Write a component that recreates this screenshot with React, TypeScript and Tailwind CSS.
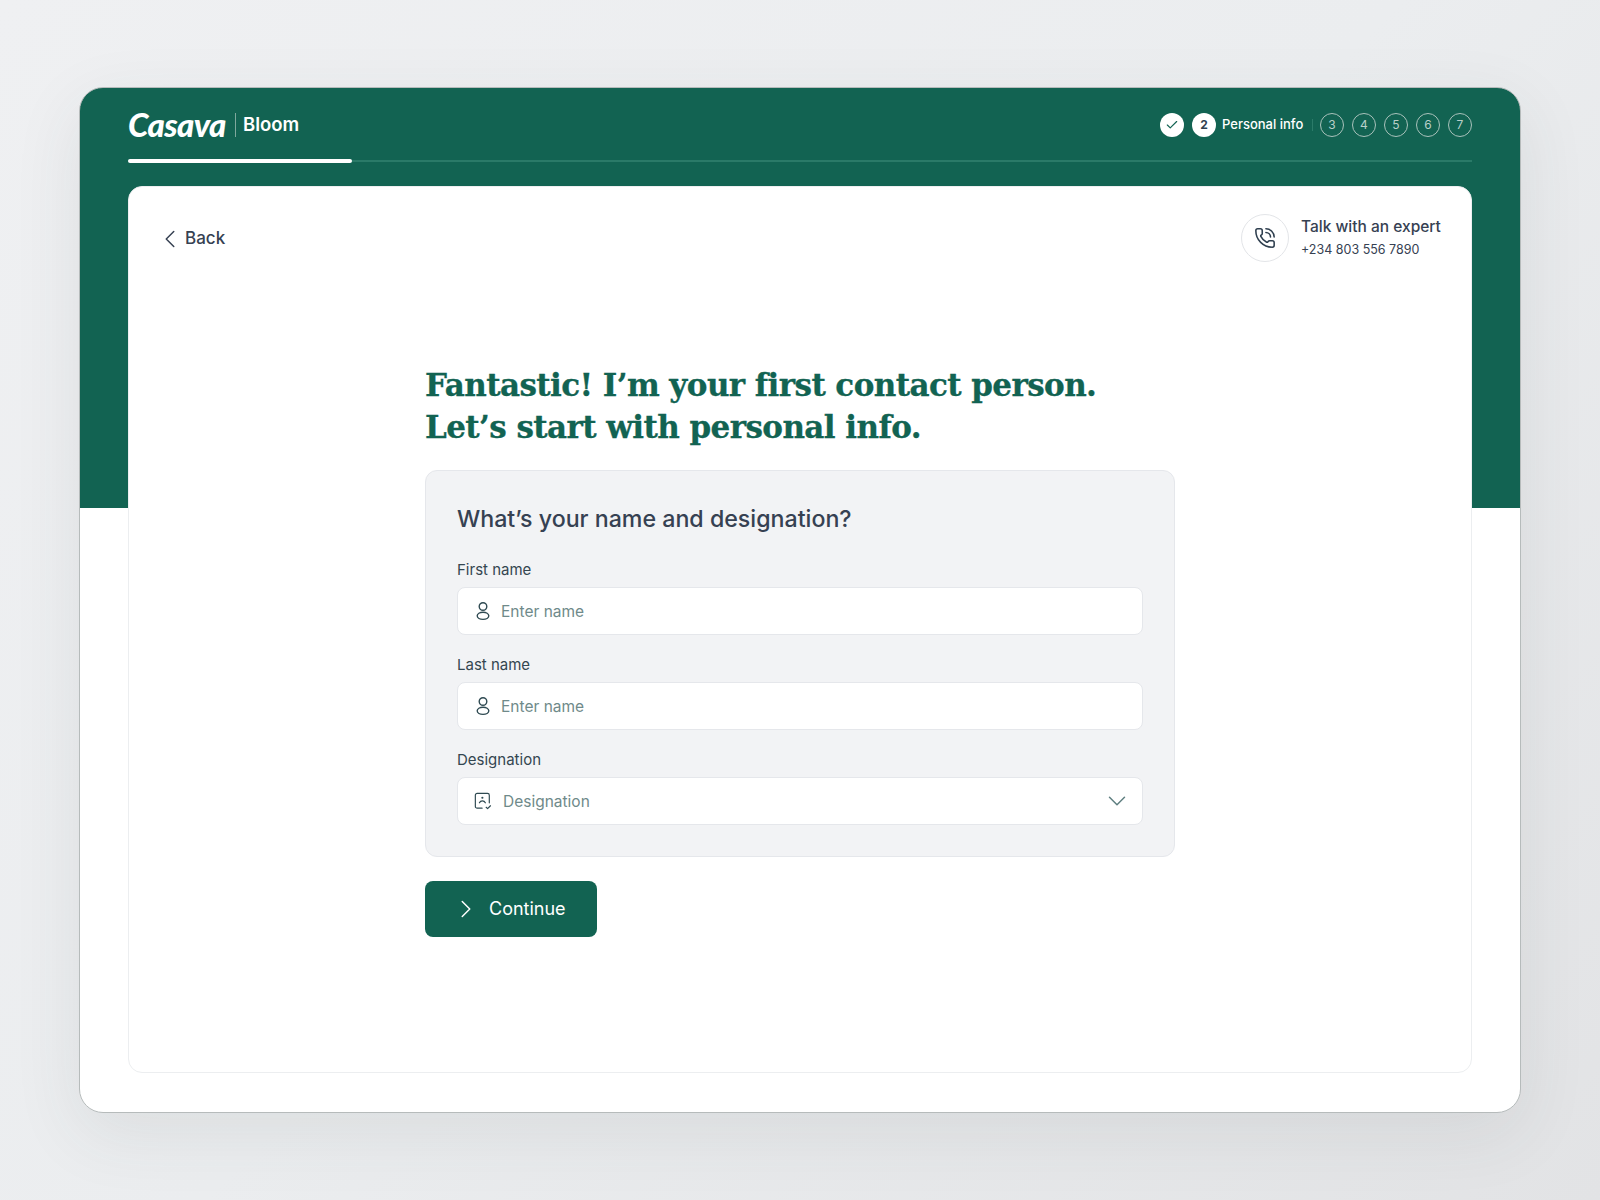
import React from 'react';
import { Check, ChevronDown, ChevronLeft, ChevronRight, PhoneCall } from 'lucide-react';

const UserIcon = () => (
  <svg width="16" height="20" viewBox="0 0 16 20" fill="none" stroke="#2f4a52" strokeWidth="1.4">
    <circle cx="8" cy="5.5" r="3.8" />
    <ellipse cx="8" cy="14.8" rx="5.8" ry="3.6" />
  </svg>
);

const BadgeIcon = () => (
  <svg width="20" height="20" viewBox="0 0 20 20" fill="none" stroke="#2f4a52" strokeWidth="1.3" strokeLinecap="round" strokeLinejoin="round">
    <path d="M9 18H3.5a2 2 0 0 1-2-2V3.5a2 2 0 0 1 2-2H15a2 2 0 0 1 2 2V12" />
    <circle cx="9.3" cy="6.4" r="1.2" fill="#2f4a52" stroke="none" />
    <path d="M6 12c.7-1.5 1.9-2.2 3.3-2.2s2.6.7 3.3 2.2" />
    <path d="M13.5 17l1.6 1.5 3.2-3.2" />
  </svg>
);

const Field = ({ label, placeholder, icon, select }: { label: string; placeholder: string; icon: React.ReactNode; select?: boolean }) => (
  <div>
    <div className="h-[20px] pt-[1px] text-[15px] leading-[20px] text-[#344650]">{label}</div>
    <div className="mt-[8px] flex h-[48px] items-center rounded-[8px] border border-[#e5e7eb] bg-white pl-[16px] pr-[10px]">
      <span className="flex w-[18px] justify-center">{icon}</span>
      <span className={`pt-[1px] text-[15.5px] text-[#6f8a8a] ${select ? 'ml-[11px]' : 'ml-[9px]'}`}>{placeholder}</span>
      {select && <ChevronDown className="ml-auto" size={30} strokeWidth={1.2} color="#5f7f80" />}
    </div>
  </div>
);

const App: React.FC = () => {
  return (
    <div
      className="h-[1200px] w-[1600px] overflow-hidden bg-[linear-gradient(135deg,#eff0f2_0%,#ebedef_50%,#e2e3e5_100%)] pl-[79px] pt-[87px]"
      style={{ fontFamily: 'Inter, Lato, sans-serif' }}
    >
      <div className="h-[1026px] w-[1442px] rounded-[24px] border border-[#b6bbbb] bg-[linear-gradient(#126352_420px,#ffffff_420px)] px-[48px] shadow-[0_20px_70px_rgba(60,65,70,0.09)]">
        {/* Header */}
        <header className="flex h-[72px] items-center justify-between pt-[1px]">
          <div className="flex items-center text-white">
            <span
              className="w-[97px] whitespace-nowrap text-[33px] font-black italic leading-none tracking-[-0.6px]"
              style={{ fontFamily: 'Lato, sans-serif' }}
            >
              Casava
            </span>
            <span className="ml-[10px] h-[24px] w-[1px] bg-[#7fa89d]" />
            <span className="ml-[7px] text-[18.5px] font-semibold leading-none">Bloom</span>
          </div>
          <div className="flex items-center">
            <span className="flex h-[24px] w-[24px] items-center justify-center rounded-full bg-white">
              <Check size={14} strokeWidth={2} color="#126352" />
            </span>
            <span className="ml-[8px] flex h-[24px] w-[24px] items-center justify-center rounded-full bg-white text-[12px] font-bold text-[#2f3f4f]">
              2
            </span>
            <span className="ml-[6px] w-[81px] whitespace-nowrap text-[13px] font-medium text-white">Personal info</span>
            <span className="ml-[9px] mr-[7px] h-[12px] w-[1px] bg-[#2b7b69]" />
            <div className="flex gap-[8px]">
              {['3', '4', '5', '6', '7'].map(n => (
                <span
                  key={n}
                  className="flex h-[24px] w-[24px] items-center justify-center rounded-full border border-[#a9c2bb] text-[12px] text-[#b9cfc9]"
                >
                  {n}
                </span>
              ))}
            </div>
          </div>
        </header>

        {/* Progress */}
        <div className="h-[2px] bg-[#2a7a68]">
          <div className="h-[4px] w-[224px] -translate-y-[1px] rounded-full bg-white" />
        </div>

        {/* Card */}
        <main className="mt-[24px] h-[887px] rounded-[14px] border border-[#eceef0] bg-white">
          <div className="flex items-start justify-between pl-[26px] pr-[32px] pt-[27px]">
            <div className="mt-[9px] flex h-[32px] items-center text-[#364152]">
              <ChevronLeft size={30} strokeWidth={1.2} />
              <span className="text-[17px] font-medium">Back</span>
            </div>
            <div className="flex items-center">
              <span className="flex h-[48px] w-[48px] items-center justify-center rounded-full border border-[#e3e5e8]">
                <PhoneCall size={22} strokeWidth={1.7} color="#2f3f4f" />
              </span>
              <div className="ml-[12px] w-[138px]">
                <div className="whitespace-nowrap pt-[1px] text-[15.5px] font-medium leading-[23px] text-[#364152]">Talk with an expert</div>
                <div className="whitespace-nowrap text-[12.5px] leading-[24px] text-[#364152]">+234 803 556 7890</div>
              </div>
            </div>
          </div>

          <div className="ml-[296px] mt-[102px] w-[750px]">
            <h1
              className="whitespace-nowrap text-[31px] font-bold leading-[42px] tracking-[-0.58px] text-[#126352] [-webkit-text-stroke:0.3px_#126352]"
              style={{ fontFamily: '"DejaVu Serif", serif' }}
            >
              Fantastic! I’m your first contact person.
              <br />
              Let’s start with personal info.
            </h1>

            <section className="mt-[22px] h-[387px] rounded-[12px] border border-[#e5e7eb] bg-[#f2f3f5] px-[31px] pt-[32px]">
              <h2 className="text-[23.2px] font-medium leading-[32px] text-[#364152]">What’s your name and designation?</h2>
              <div className="mt-[24px] flex flex-col gap-[19px]">
                <Field label="First name" placeholder="Enter name" icon={<UserIcon />} />
                <Field label="Last name" placeholder="Enter name" icon={<UserIcon />} />
                <Field label="Designation" placeholder="Designation" icon={<BadgeIcon />} select />
              </div>
            </section>

            <button className="mt-[24px] flex h-[56px] w-[172px] items-center rounded-[8px] bg-[#126352] pb-[1px] pl-[26px] text-white">
              <ChevronRight size={30} strokeWidth={1.2} />
              <span className="ml-[8px] text-[18px]">Continue</span>
            </button>
          </div>
        </main>
      </div>
    </div>
  );
};

export default App;
